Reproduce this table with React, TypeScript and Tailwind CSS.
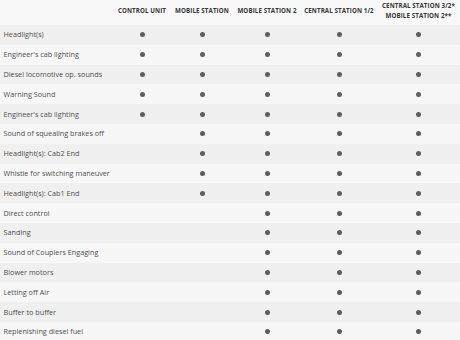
import React from "react";

const cols = ["CONTROL UNIT", "MOBILE STATION", "MOBILE STATION 2", "CENTRAL STATION 1/2"];

const rows: [string, boolean[]][] = [
  ["Headlight(s)", [true, true, true, true, true]],
  ["Engineer's cab lighting", [true, true, true, true, true]],
  ["Diesel locomotive op. sounds", [true, true, true, true, true]],
  ["Warning Sound", [true, true, true, true, true]],
  ["Engineer's cab lighting", [true, true, true, true, true]],
  ["Sound of squealing brakes off", [false, true, true, true, true]],
  ["Headlight(s): Cab2 End", [false, true, true, true, true]],
  ["Whistle for switching maneuver", [false, true, true, true, true]],
  ["Headlight(s): Cab1 End", [false, true, true, true, true]],
  ["Direct control", [false, false, true, true, true]],
  ["Sanding", [false, false, true, true, true]],
  ["Sound of Couplers Engaging", [false, false, true, true, true]],
  ["Blower motors", [false, false, true, true, true]],
  ["Letting off Air", [false, false, true, true, true]],
  ["Buffer to buffer", [false, false, true, true, true]],
  ["Replenishing diesel fuel", [false, false, true, true, true]],
];

export default function App() {
  return (
    <div
      className="w-[460px] h-[340px] overflow-hidden bg-[#f7f7f7]"
      style={{ fontFamily: '"Open Sans", "Liberation Sans", sans-serif' }}
    >
      <div className="grid grid-cols-[113px_58px_62px_68px_76px_83px] h-[25px] items-center pb-[3px] bg-[#f8f8f8]">
        <div />
        {cols.map((c) => (
          <div key={c} className="text-center text-[6.2px] font-bold text-[#363636] tracking-[0.1px] whitespace-nowrap">
            {c}
          </div>
        ))}
        <div className="text-center text-[6.2px] font-bold text-[#363636] tracking-[0.1px] leading-[10.5px] whitespace-nowrap">
          <div>CENTRAL STATION 3/2*</div>
          <div>MOBILE STATION 2**</div>
        </div>
      </div>
      {rows.map(([label, vals], i) => (
        <div
          key={i}
          className={
            "grid grid-cols-[113px_58px_62px_68px_76px_83px] h-[19.8px] items-center " +
            (i % 2 === 0 ? "bg-[#f0f0f0]" : "bg-[#f7f7f7]")
          }
        >
          <div className="pl-[3.5px] text-[7.25px] text-[#4e4e4e] whitespace-nowrap">{label}</div>
          {vals.map((v, j) => (
            <div key={j} className="flex justify-center">
              {v ? <div className="w-[5px] h-[5px] rounded-full bg-[#5e5e5e]" /> : null}
            </div>
          ))}
        </div>
      ))}
    </div>
  );
}
